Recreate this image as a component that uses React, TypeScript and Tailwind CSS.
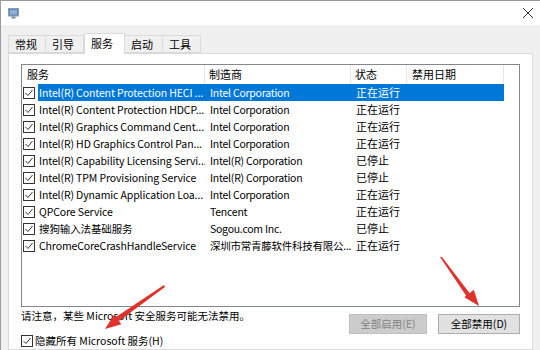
import React from 'react';

const services = [
  { name: 'Intel(R) Content Protection HECI ...', maker: 'Intel Corporation', status: '正在运行' },
  { name: 'Intel(R) Content Protection HDCP...', maker: 'Intel Corporation', status: '正在运行' },
  { name: 'Intel(R) Graphics Command Cent...', maker: 'Intel Corporation', status: '正在运行' },
  { name: 'Intel(R) HD Graphics Control Pan...', maker: 'Intel Corporation', status: '正在运行' },
  { name: 'Intel(R) Capability Licensing Servi...', maker: 'Intel(R) Corporation', status: '已停止' },
  { name: 'Intel(R) TPM Provisioning Service', maker: 'Intel(R) Corporation', status: '已停止' },
  { name: 'Intel(R) Dynamic Application Loa...', maker: 'Intel Corporation', status: '正在运行' },
  { name: 'QPCore Service', maker: 'Tencent', status: '正在运行' },
  { name: '搜狗输入法基础服务', maker: 'Sogou.com Inc.', status: '已停止' },
  { name: 'ChromeCoreCrashHandleService', maker: '深圳市常青藤软件科技有限公...', status: '正在运行' },
];

const TABS = ['常规', '引导', '服务', '启动', '工具'];

function CheckBox() {
  return (
    <svg width="12" height="12" viewBox="0 0 12 12" className="shrink-0">
      <rect x="0.5" y="0.5" width="11" height="11" fill="#fff" stroke="#333" />
      <polyline points="2.5,6 5,8.5 9.5,3" fill="none" stroke="#333" strokeWidth="1" />
    </svg>
  );
}

export default function App() {
  return (
    <div
      className="relative w-[540px] h-[350px] overflow-hidden bg-[#f0f0f0] border-t border-l border-[#9a9a9a] flex flex-col text-[10.5px] text-black"
      style={{ fontFamily: '"Noto Sans CJK SC", "Noto Sans", sans-serif' }}
    >
      {/* title bar */}
      <div className="h-[24px] bg-white flex items-center justify-between pl-[7px] pr-[6px] shrink-0">
        <svg width="11" height="11" viewBox="0 0 11 11">
          <rect x="0.5" y="0.5" width="10" height="7.5" fill="#5f86b3" stroke="#8aa0b8" />
          <rect x="2" y="2" width="7" height="4.5" fill="#8fb2d6" />
          <rect x="3.5" y="8.5" width="4" height="2" fill="#7d8a99" />
        </svg>
        <svg width="12" height="12" viewBox="0 0 12 12">
          <path d="M1 1 L11 11 M11 1 L1 11" stroke="#333" strokeWidth="1" />
        </svg>
      </div>

      {/* tabs */}
      <div className="flex items-end pl-[7px] mt-[7px] h-[21px] shrink-0 text-[11px]">
        {TABS.map((t) =>
          t === '服务' ? (
            <div
              key={t}
              className="relative z-10 -mb-px h-[21px] w-[41px] bg-white border border-b-0 border-[#d9d9d9] pl-[6px] pt-[1px] leading-[16px]"
            >
              {t}
            </div>
          ) : (
            <div
              key={t}
              className="h-[18px] w-[38px] bg-[#f0f0f0] border border-[#d9d9d9] border-l-0 first:border-l pl-[6px] leading-[16px]"
            >
              {t}
            </div>
          )
        )}
      </div>

      {/* panel */}
      <div className="flex-1 mx-[7px] bg-white border border-[#d9d9d9] pt-[10px] px-[12px] flex flex-col">
        <div className="h-[243px] border border-[#828790] bg-white flex flex-col shrink-0">
          {/* header */}
          <div className="flex h-[19px] items-center shrink-0 text-[11px]">
            <div className="w-[183px] h-full border-r border-[#e5e5e5] pl-[5px] flex items-center">服务</div>
            <div className="w-[146px] h-full border-r border-[#e5e5e5] pl-[4px] flex items-center">制造商</div>
            <div className="w-[56px] h-full border-r border-[#e5e5e5] pl-[4px] flex items-center">状态</div>
            <div className="w-[97px] h-full border-r border-[#e5e5e5] pl-[5px] flex items-center">禁用日期</div>
          </div>
          {services.map((s, i) => (
            <div key={i} className="flex h-[17px] items-center whitespace-nowrap">
              <div className="w-[16px] pl-[1px] flex items-center">
                <CheckBox />
              </div>
              <div
                className={`flex h-full items-center w-[466px] ${
                  i === 0 ? 'bg-[#0078d7] text-white' : ''
                }`}
              >
                <div className="w-[167px] pl-[1px] overflow-hidden tracking-[-0.12px]">{s.name}</div>
                <div className="w-[146px] pl-[5px] tracking-[-0.25px]">{s.maker}</div>
                <div className="w-[56px] pl-[5px] text-[11px]">{s.status}</div>
                <div className="w-[97px]" />
              </div>
            </div>
          ))}
        </div>

        <div className="flex justify-between">
          <div className="flex flex-col">
            <div className="mt-[1px] leading-[16px]">请注意，某些 Microsoft 安全服务可能无法禁用。</div>
            <div className="mt-[9px] flex items-center gap-[2px] leading-[16px]">
              <CheckBox />
              <span>隐藏所有 Microsoft 服务(H)</span>
            </div>
          </div>
          <div className="flex gap-[11px] mt-[7px]">
            <div className="w-[78px] h-[20px] bg-[#cccccc] border border-[#bfbfbf] text-[#838383] flex items-center justify-center">
              全部启用(E)
            </div>
            <div className="w-[82px] h-[20px] bg-[#e1e1e1] border border-[#adadad] flex items-center justify-center">
              全部禁用(D)
            </div>
          </div>
        </div>
      </div>

      {/* red annotation arrows */}
      <svg className="absolute inset-0 pointer-events-none" width="540" height="350" viewBox="0 0 540 350">
        <polygon points="163,284 164,286 118,320 115,316" fill="#e0312b" />
        <polygon points="104,328 120.4,323.2 113.2,313.6" fill="#e0312b" />
        <polygon points="439,256 441,256 470,294 466,296" fill="#e0312b" />
        <polygon points="478,305 463.4,296.2 472.8,288.8" fill="#e0312b" />
      </svg>
    </div>
  );
}
